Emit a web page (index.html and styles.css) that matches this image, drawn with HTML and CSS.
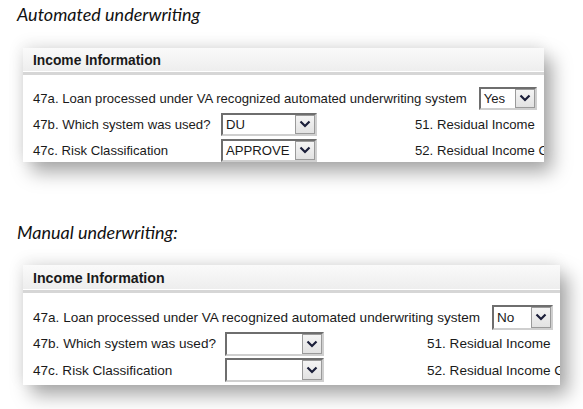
FILE: index.html
```html
<!DOCTYPE html>
<html>
<head>
<meta charset="utf-8">
<link rel="stylesheet" href="styles.css">
</head>
<body>
<div class="page">
  <p class="caption caption-a">Automated underwriting</p>
  <section class="panel panel-a">
    <div class="panel-head">Income Information</div>
    <div class="panel-body">
      <div class="row">
        <span class="label">47a. Loan processed under VA recognized automated underwriting system</span>
        <span class="select select-short"><span class="value">Yes</span><span class="btn"><svg viewBox="0 0 12 8" width="12" height="8"><polyline points="1.5,1.5 6,6 10.5,1.5" fill="none" stroke="#1b1f3a" stroke-width="2.2"/></svg></span></span>
      </div>
      <div class="row">
        <span class="label label-fixed">47b. Which system was used?</span>
        <span class="select select-wide"><span class="value">DU</span><span class="btn"><svg viewBox="0 0 12 8" width="12" height="8"><polyline points="1.5,1.5 6,6 10.5,1.5" fill="none" stroke="#1b1f3a" stroke-width="2.2"/></svg></span></span>
        <span class="side">51. Residual Income</span>
      </div>
      <div class="row">
        <span class="label label-fixed">47c. Risk Classification</span>
        <span class="select select-wide"><span class="value">APPROVE</span><span class="btn"><svg viewBox="0 0 12 8" width="12" height="8"><polyline points="1.5,1.5 6,6 10.5,1.5" fill="none" stroke="#1b1f3a" stroke-width="2.2"/></svg></span></span>
        <span class="side">52. Residual Income Guideline</span>
      </div>
    </div>
  </section>

  <p class="caption caption-b">Manual underwriting:</p>
  <section class="panel panel-b">
    <div class="panel-head">Income Information</div>
    <div class="panel-body">
      <div class="row">
        <span class="label">47a. Loan processed under VA recognized automated underwriting system</span>
        <span class="select select-short"><span class="value">No</span><span class="btn"><svg viewBox="0 0 12 8" width="12" height="8"><polyline points="1.5,1.5 6,6 10.5,1.5" fill="none" stroke="#1b1f3a" stroke-width="2.2"/></svg></span></span>
      </div>
      <div class="row">
        <span class="label label-fixed">47b. Which system was used?</span>
        <span class="select select-wide"><span class="value"></span><span class="btn"><svg viewBox="0 0 12 8" width="12" height="8"><polyline points="1.5,1.5 6,6 10.5,1.5" fill="none" stroke="#1b1f3a" stroke-width="2.2"/></svg></span></span>
        <span class="side">51. Residual Income</span>
      </div>
      <div class="row">
        <span class="label label-fixed">47c. Risk Classification</span>
        <span class="select select-wide"><span class="value"></span><span class="btn"><svg viewBox="0 0 12 8" width="12" height="8"><polyline points="1.5,1.5 6,6 10.5,1.5" fill="none" stroke="#1b1f3a" stroke-width="2.2"/></svg></span></span>
        <span class="side">52. Residual Income Guideline</span>
      </div>
    </div>
  </section>
</div>
</body>
</html>
```

FILE: styles.css
```css
* { box-sizing: border-box; }
html, body { margin: 0; padding: 0; background: #fff; }
body { width: 583px; height: 409px; overflow: hidden; }

.page {
  display: flex;
  flex-direction: column;
  align-items: flex-start;
  padding-left: 17px;
}

.caption {
  margin: 0;
  font-family: Lato, "Open Sans", sans-serif;
  font-style: italic;
  font-size: 18px;
  line-height: 22px;
  color: #111;
}
.caption-a { margin-top: 3px; }
.caption-b { margin-top: 59px; }

.panel {
  margin-left: 6px;
  background: #fff;
  overflow: hidden;
  box-shadow: 8px 10px 18px rgba(0,0,0,0.35), -2px -4px 14px rgba(0,0,0,0.08);
  font-family: "Liberation Sans", Arial, sans-serif;
  color: #1a1a1a;
}
.panel-a { margin-top: 23px; width: 521px; height: 114px; font-size: 13.15px; }
.panel-b { margin-top: 22px; width: 537px; height: 120px; font-size: 13.55px; }

.panel-head {
  display: flex;
  align-items: center;
  padding-left: 10px;
  font-weight: bold;
  background: linear-gradient(#fafafa, #ededed);
  border-bottom: 3px solid #d6d6d6;
  box-shadow: inset 0 -4px 0 -3px #fff;
}
.panel-a .panel-head { height: 27px; font-size: 13.8px; }
.panel-b .panel-head { height: 28px; font-size: 14.2px; }

.panel-body { padding-left: 10px; }
.panel-a .panel-body { padding-top: 10px; }
.panel-b .panel-body { padding-top: 11px; }

.row {
  display: flex;
  align-items: center;
  white-space: nowrap;
}
.panel-a .row { height: 26px; }
.panel-b .row { height: 26.5px; }

.label { flex: none; }
.panel-a .label { margin-right: 12px; }
.panel-b .label { margin-right: 12px; }
.panel-a .label-fixed { width: 188px; margin-right: 0; }
.panel-b .label-fixed { width: 192px; margin-right: 0; }

.select {
  flex: none;
  display: flex;
  align-items: stretch;
  background: #fff;
  border-top: 2px solid #6e6e6e;
  border-left: 2px solid #6e6e6e;
  border-right: 2px solid #cfcfcf;
  border-bottom: 2px solid #cfcfcf;
}
.panel-a .select-short { width: 58px; height: 23px; }
.panel-b .select-short { width: 61px; height: 25px; }
.panel-a .select-wide { width: 96px; height: 23px; }
.panel-b .select-wide { width: 99px; height: 24px; }

.value {
  flex: 1;
  display: flex;
  align-items: center;
  padding-left: 3px;
  overflow: hidden;
}
.btn {
  flex: none;
  width: 20px;
  display: flex;
  align-items: center;
  justify-content: center;
  background: linear-gradient(#f4f4f4, #e2e2e2);
  border: 1px solid #9a9a9a;
}

.side { flex: none; }
.panel-a .side { margin-left: 98px; }
.panel-b .side { margin-left: 103px; }
```
